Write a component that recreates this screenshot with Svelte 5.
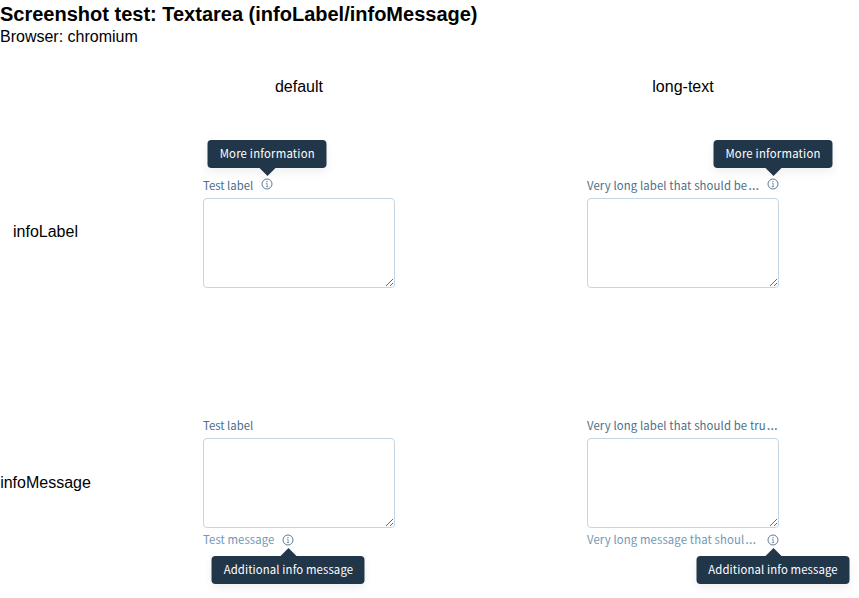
<script>
  const columns = ['default', 'long-text'];
  const rows = [
    {
      name: 'infoLabel',
      cells: [
        { label: 'Test label', labelInfo: 'More information' },
        { label: 'Very long label that should be', long: true, labelInfo: 'More information' },
      ],
    },
    {
      name: 'infoMessage',
      cells: [
        { label: 'Test label', message: 'Test message', messageInfo: 'Additional info message' },
        {
          label: 'Very long label that should be tru',
          long: true,
          message: 'Very long message that shoul',
          messageInfo: 'Additional info message',
        },
      ],
    },
  ];
</script>

{#snippet info(text, placement)}
  <span class="info">
    <svg width="12" height="12" viewBox="0 0 12 12" fill="none">
      <circle cx="6" cy="6" r="5" stroke="currentColor" stroke-width="0.9" />
      <path d="M4.9 5.2H6.1V8.6M4.9 8.6H7.1" stroke="currentColor" stroke-width="0.7" />
      <rect x="5.5" y="3" width="1" height="1" fill="currentColor" />
    </svg>
    <span class="tooltip {placement}">{text}</span>
  </span>
{/snippet}

{#snippet caption(text, long)}
  <span class="text" class:long>{text}{#if long}<span class="dots">…</span>{/if}</span>
{/snippet}

<main>
  <h1>Screenshot test: Textarea (infoLabel/infoMessage)</h1>
  <p class="browser">Browser: chromium</p>

  <div class="columns">
    <span></span>
    {#each columns as column}
      <span>{column}</span>
    {/each}
  </div>

  {#each rows as row}
    <section class={row.name}>
      <div class="name">{row.name}</div>
      {#each row.cells as cell}
        <div class="field">
          <div class="line label">
            {@render caption(cell.label, cell.long)}
            {#if cell.labelInfo}{@render info(cell.labelInfo, 'top')}{/if}
          </div>
          <textarea aria-label={cell.label}></textarea>
          {#if cell.message}
            <div class="line message">
              {@render caption(cell.message, cell.long)}
              {@render info(cell.messageInfo, 'bottom')}
            </div>
          {/if}
        </div>
      {/each}
    </section>
  {/each}
</main>

<style>
  :global(body) {
    margin: 0;
    background: #fff;
  }
  main {
    box-sizing: border-box;
    height: 598px;
    overflow: hidden;
    font: 16px/18px 'Liberation Sans', Arial, sans-serif;
    color: #000;
  }
  h1 {
    margin: 0;
    padding-top: 3px;
    font-size: 20px;
    line-height: 23px;
    height: 25px;
    white-space: nowrap;
  }
  .browser {
    margin: 0;
    height: 50px;
  }
  .columns,
  section {
    display: grid;
    grid-template-columns: 107px 384px 384px;
    width: 875px;
  }
  .columns {
    height: 100px;
    text-align: center;
  }
  section {
    height: 240px;
  }
  .name {
    width: 91px;
    padding-top: 45px;
    text-align: center;
  }
  .infoMessage .name {
    padding-top: 56px;
  }
  .field {
    width: 192px;
    margin: 0 auto;
    font-family: 'Noto Sans CJK SC', sans-serif;
    font-size: 11.35px;
    line-height: 14px;
  }
  .line {
    display: flex;
    height: 16px;
  }
  .label {
    padding-bottom: 4px;
    color: #4d6e8a;
  }
  .message {
    padding-top: 4px;
    color: #7397b5;
  }
  .text {
    white-space: nowrap;
  }
  .message .text {
    letter-spacing: 0.08px;
  }
  .line .text.long {
    flex: 1;
    min-width: 0;
    letter-spacing: 0.12px;
  }
  .dots {
    margin-left: 1px;
    font-family: 'Open Sans', sans-serif;
    font-size: 14px;
    line-height: 1;
  }
  .info {
    position: relative;
    flex: none;
    width: 12px;
    height: 12px;
    margin-left: 8px;
    color: #4d6e8a;
  }
  .message .info {
    margin-top: 2px;
  }
  .info svg {
    display: block;
  }
  textarea {
    display: block;
    box-sizing: border-box;
    width: 192px;
    height: 90px;
    margin: 0;
    padding: 8px;
    border: 1px solid #c4d6e3;
    border-radius: 4px;
    outline: 0;
    background: #fff;
    resize: both;
  }
  .tooltip {
    position: absolute;
    left: 50%;
    z-index: 1;
    box-sizing: border-box;
    width: 119px;
    height: 28px;
    padding: 6px 0;
    border-radius: 4px;
    background: #22364a;
    box-shadow: 0 4px 8px rgba(34, 54, 74, 0.08);
    color: #fff;
    letter-spacing: 0.2px;
    text-align: center;
    white-space: nowrap;
    transform: translateX(-50%);
  }
  .tooltip::after {
    content: '';
    position: absolute;
    left: 50%;
    margin-left: -8px;
    border: 8px solid transparent;
  }
  .top {
    bottom: 22px;
  }
  .top::after {
    top: 100%;
    border-top-color: #22364a;
    border-bottom: 0;
  }
  .bottom {
    top: 22px;
    width: 153px;
    letter-spacing: 0.12px;
  }
  .bottom::after {
    bottom: 100%;
    border-bottom-color: #22364a;
    border-top: 0;
  }
</style>
